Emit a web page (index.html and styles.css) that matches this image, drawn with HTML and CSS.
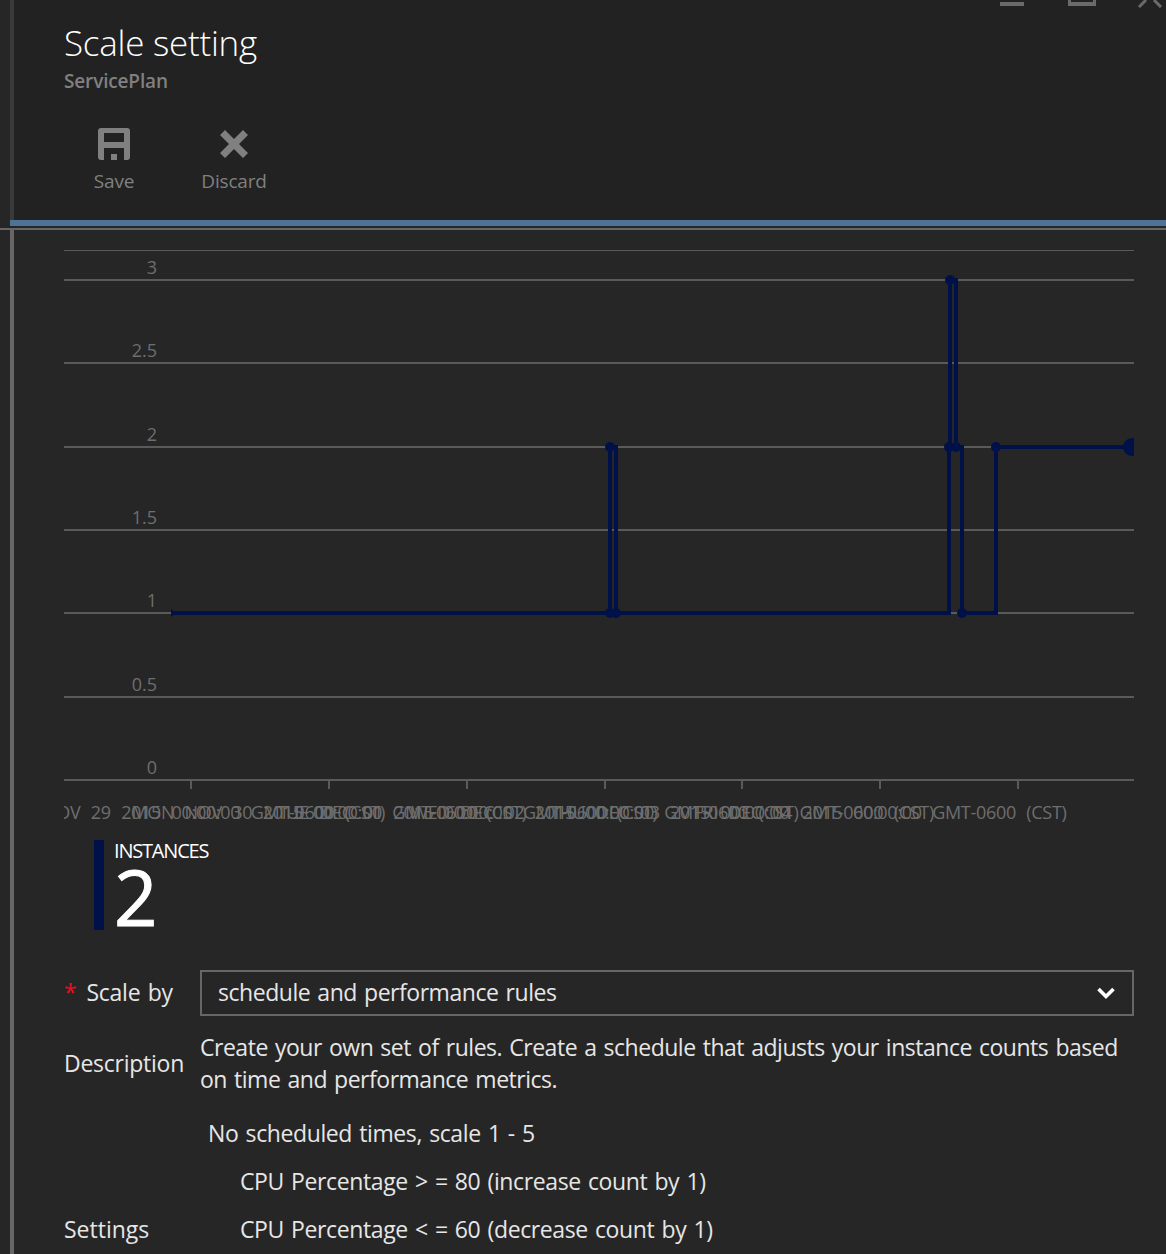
FILE: index.html
```html
<!DOCTYPE html>
<html lang="en">
<head>
    <meta charset="UTF-8">
    <meta name="viewport" content="width=device-width, initial-scale=1.0">
    <title>Scale setting</title>
    <link rel="stylesheet" href="styles.css">
</head>
<body>

    <div class="blade-head">
        <h1 class="blade-title">Scale setting</h1>
        <div class="blade-sub">ServicePlan</div>
        <div class="commands">
            <div class="command">
                <svg width="32" height="32" viewBox="0 0 32 32">
                    <path fill="#808080" fill-rule="evenodd" d="M3 0 H29 Q32 0 32 3 V29 Q32 32 29 32 H26 V20 H6 V32 H3 Q0 32 0 29 V3 Q0 0 3 0 Z M6 5 V14 H26 V5 Z"/>
                    <rect x="13" y="26" width="6" height="6" fill="#808080"/>
                </svg>
                <span>Save</span>
            </div>
            <div class="command command-discard">
                <svg width="32" height="32" viewBox="0 0 32 32">
                    <path fill="#808080" d="M7 2 L16 11 L25 2 L30 7 L21 16 L30 25 L25 30 L16 21 L7 30 L2 25 L11 16 L2 7 Z"/>
                </svg>
                <span>Discard</span>
            </div>
        </div>
    </div>
    <div class="head-rule"></div>

    <div class="blade-body">
        <svg class="chart" width="1070" height="590" viewBox="64 240 1070 590">
            <g class="grid">
                <line class="grid-top" x1="64" x2="1134" y1="250.5" y2="250.5"/>
                <line x1="64" x2="1134" y1="280" y2="280"/>
                <line x1="64" x2="1134" y1="363" y2="363"/>
                <line x1="64" x2="1134" y1="447" y2="447"/>
                <line x1="64" x2="1134" y1="530" y2="530"/>
                <line x1="64" x2="1134" y1="613" y2="613"/>
                <line x1="64" x2="1134" y1="697" y2="697"/>
                <line x1="64" x2="1134" y1="780" y2="780"/>
                <path d="M191 780v9 M329 780v9 M467 780v9 M605 780v9 M742 780v9 M880 780v9 M1018 780v9"/>
            </g>
            <g class="y-labels">
                <text x="157" y="274">3</text>
                <text x="157" y="357">2.5</text>
                <text x="157" y="441">2</text>
                <text x="157" y="524">1.5</text>
                <text x="157" y="607">1</text>
                <text x="157" y="691">0.5</text>
                <text x="157" y="774">0</text>
            </g>
            <g class="x-labels">
                <text x="191" y="819">SUN NOV 29 2015 00:00:00 GMT-0600 (CST)</text>
                <text x="329" y="819">MON NOV 30 2015 00:00:00 GMT-0600 (CST)</text>
                <text x="467" y="819">TUE DEC 01 2015 00:00:00 GMT-0600 (CST)</text>
                <text x="605" y="819">WED DEC 02 2015 00:00:00 GMT-0600 (CST)</text>
                <text x="742" y="819">THU DEC 03 2015 00:00:00 GMT-0600 (CST)</text>
                <text x="880" y="819">FRI DEC 04 2015 00:00:00 GMT-0600 (CST)</text>
            </g>
            <path class="series" d="M172 613 H610 V447 H616 V613 H949 V447 H950 V280 H956 V447 H962 V613 H996 V447 H1134"/>
            <g class="dots">
                <path d="M171 609 L176 613 L171 617 Z"/>
                <circle cx="610" cy="447" r="5"/>
                <circle cx="610" cy="613" r="5"/>
                <circle cx="616" cy="613" r="5"/>
                <circle cx="949" cy="447" r="5"/>
                <circle cx="950" cy="280" r="5"/>
                <circle cx="956" cy="447" r="5"/>
                <circle cx="962" cy="613" r="5"/>
                <circle cx="996" cy="447" r="5"/>
                <circle cx="1132" cy="447" r="9"/>
            </g>
        </svg>

        <div class="tile">
            <div class="tile-label">INSTANCES</div>
            <div class="tile-value">2</div>
        </div>

        <div class="form">
            <div class="form-label label-scale"><span class="required">*</span>Scale by</div>
            <div class="select">
                <span>schedule and performance rules</span>
                <svg width="20" height="14" viewBox="0 0 20 14"><path d="M2.5 3 L10 10.5 L17.5 3" fill="none" stroke="#fff" stroke-width="3.6"/></svg>
            </div>

            <div class="form-label label-description">Description</div>
            <div class="description">Create your own set of rules. Create a schedule that adjusts your instance counts based on time and performance metrics.</div>

            <div class="form-label label-bottom">Settings</div>
            <div class="settings">
                <div class="profile">No scheduled times, scale 1 - 5</div>
                <div class="rule">CPU Percentage &gt; = 80 (increase count by 1)</div>
                <div class="rule">CPU Percentage &lt; = 60 (decrease count by 1)</div>
            </div>
        </div>
    </div>

    <div class="window-controls">
        <span class="ctl-min"></span>
        <span class="ctl-max"></span>
        <svg class="ctl-close" width="26" height="8" viewBox="0 0 26 8"><path d="M2 7 L9 0 M24 7 L17 0" stroke="#6a6a6a" stroke-width="3"/></svg>
    </div>

</body>
</html>
```

FILE: styles.css
```css
body {
    font-family: 'Open Sans', 'Noto Sans', sans-serif;
    margin: 0;
    padding: 0;
    background-color: #262626;
    color: #e6e6e6;
    height: 1254px;
    overflow: hidden;
    position: relative;
}

.window-controls span {
    position: absolute;
    top: 0;
    box-sizing: border-box;
}

.ctl-min {
    left: 1000px;
    width: 24px;
    height: 6px;
    border-bottom: 4px solid #6a6a6a;
}

.ctl-max {
    left: 1068px;
    width: 28px;
    height: 6px;
    border: 3px solid #6a6a6a;
    border-top: none;
    border-bottom-width: 4px;
}

.ctl-close {
    position: absolute;
    left: 1137px;
    top: 0;
}

.blade-head {
    height: 220px;
    margin-left: 10px;
    padding-left: 54px;
    background-color: #222222;
    border-bottom: 6px solid #4f7396;
    position: relative;
}

.blade-head::before {
    content: "";
    position: absolute;
    left: 0;
    top: 0;
    bottom: 0;
    width: 4px;
    background-color: #3a3a3a;
}

.blade-title {
    margin: 0;
    padding-top: 18px;
    font-size: 35px;
    font-weight: 300;
    line-height: 50px;
    color: #ffffff;
    letter-spacing: -0.25px;
}

.blade-sub {
    margin-top: 1px;
    font-size: 19px;
    font-weight: 600;
    line-height: 24px;
    color: #808080;
    letter-spacing: -0.15px;
}

.commands {
    display: flex;
    margin-top: 35px;
}

.command {
    width: 100px;
    display: flex;
    flex-direction: column;
    align-items: center;
    color: #808080;
    font-size: 19px;
    line-height: 26px;
    letter-spacing: -0.2px;
}

.command svg {
    margin-bottom: 8px;
}

.command-discard {
    margin-left: 20px;
}

.head-rule {
    height: 2px;
    margin-top: 2px;
    background-color: #666666;
}

.blade-body {
    box-sizing: border-box;
    margin-left: 10px;
    border-left: 4px solid #666666;
    padding: 10px 32px 0 50px;
    background-color: #262626;
    height: 1024px;
    overflow: hidden;
}

.chart {
    display: block;
}

.grid line,
.grid path {
    stroke: #5a5a5a;
    stroke-width: 2;
}

.grid .grid-top {
    stroke-width: 1;
}

.y-labels text {
    font-size: 18px;
    fill: #6e6e6e;
    text-anchor: end;
}

.x-labels text {
    font-size: 18px;
    fill: #6e6e6e;
    text-anchor: middle;
    letter-spacing: -0.3px;
    word-spacing: 6px;
}

.series {
    fill: none;
    stroke: #00114a;
    stroke-width: 4;
}

.dots {
    fill: #00114a;
}

.tile {
    margin: 10px 0 0 30px;
    height: 90px;
    border-left: 10px solid #00114a;
    padding-left: 10px;
    color: #ffffff;
}

.tile-label {
    font-size: 20px;
    line-height: 22px;
    letter-spacing: -1.2px;
}

.tile-value {
    font-size: 76px;
    font-weight: 500;
    -webkit-text-stroke: 1px #ffffff;
    line-height: 68px;
    margin-top: 1px;
}

.form {
    display: grid;
    grid-template-columns: 136px 1fr;
    margin-top: 40px;
    font-size: 23px;
    letter-spacing: -0.46px;
    word-spacing: 1.6px;
    color: #e6e6e6;
    line-height: 32px;
}

.form-label {
    align-self: center;
    letter-spacing: -0.25px;
}

.label-scale {
    margin-top: -2px;
}

.label-description {
    margin-top: 14px;
}

.label-bottom {
    align-self: end;
    letter-spacing: 0;
}

.required {
    color: #e81123;
    margin-right: 10px;
}

.select {
    height: 46px;
    box-sizing: border-box;
    border: 2px solid #666666;
    padding: 0 16px;
    display: flex;
    align-items: center;
    justify-content: space-between;
}

.select span {
    margin-top: -2px;
}

.description {
    margin-top: 15px;
    letter-spacing: -0.48px;
}

.settings {
    margin-top: 22px;
    letter-spacing: -0.39px;
}

.profile {
    padding-left: 8px;
}

.rule {
    padding-left: 40px;
    margin-top: 16px;
}
```
